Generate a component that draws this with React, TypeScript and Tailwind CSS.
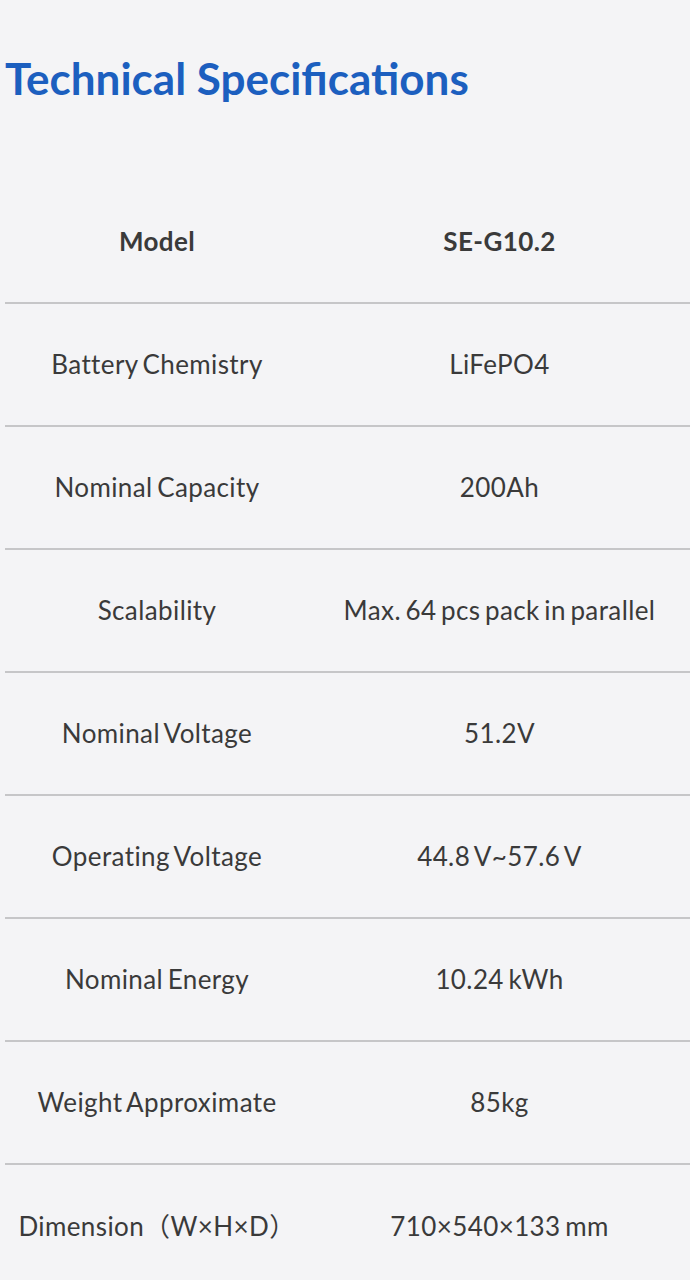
import React from "react";

const rows: [string, string][] = [
  ["Battery Chemistry", "LiFePO4"],
  ["Nominal Capacity", "200Ah"],
  ["Scalability", "Max. 64 pcs pack in parallel"],
  ["Nominal Voltage", "51.2V"],
  ["Operating Voltage", "44.8 V~57.6 V"],
  ["Nominal Energy", "10.24 kWh"],
  ["Weight Approximate", "85kg"],
  ["Dimension（W×H×D）", "710×540×133 mm"],
];

export default function App() {
  return (
    <div
      className="min-h-[1280px] bg-[#f4f4f6] pl-[5px] overflow-hidden"
      style={{ fontFamily: "Lato, 'Noto Sans CJK SC', sans-serif" }}
    >
      <h1 className="pt-[56px] text-[44px] leading-none font-bold text-[#1c5fbf]">
        Technical Specifications
      </h1>
      <div className="mt-[81px] flex flex-col text-[26px] tracking-[0.4px] [word-spacing:-2.5px] text-[#3a3a3a]">
        <div className="flex h-[123px] items-center border-b-2 border-[#c6c6c8] font-bold">
          <div className="w-[304px] text-center">Model</div>
          <div className="flex-1 text-center">SE-G10.2</div>
        </div>
        {rows.map(([k, v], i) => (
          <div
            key={k}
            className={
              i === rows.length - 1
                ? "flex h-[123px] items-center"
                : "flex h-[123px] items-center border-b-2 border-[#c6c6c8]"
            }
          >
            <div className="w-[304px] text-center">{k}</div>
            <div className="flex-1 text-center">{v}</div>
          </div>
        ))}
      </div>
    </div>
  );
}
